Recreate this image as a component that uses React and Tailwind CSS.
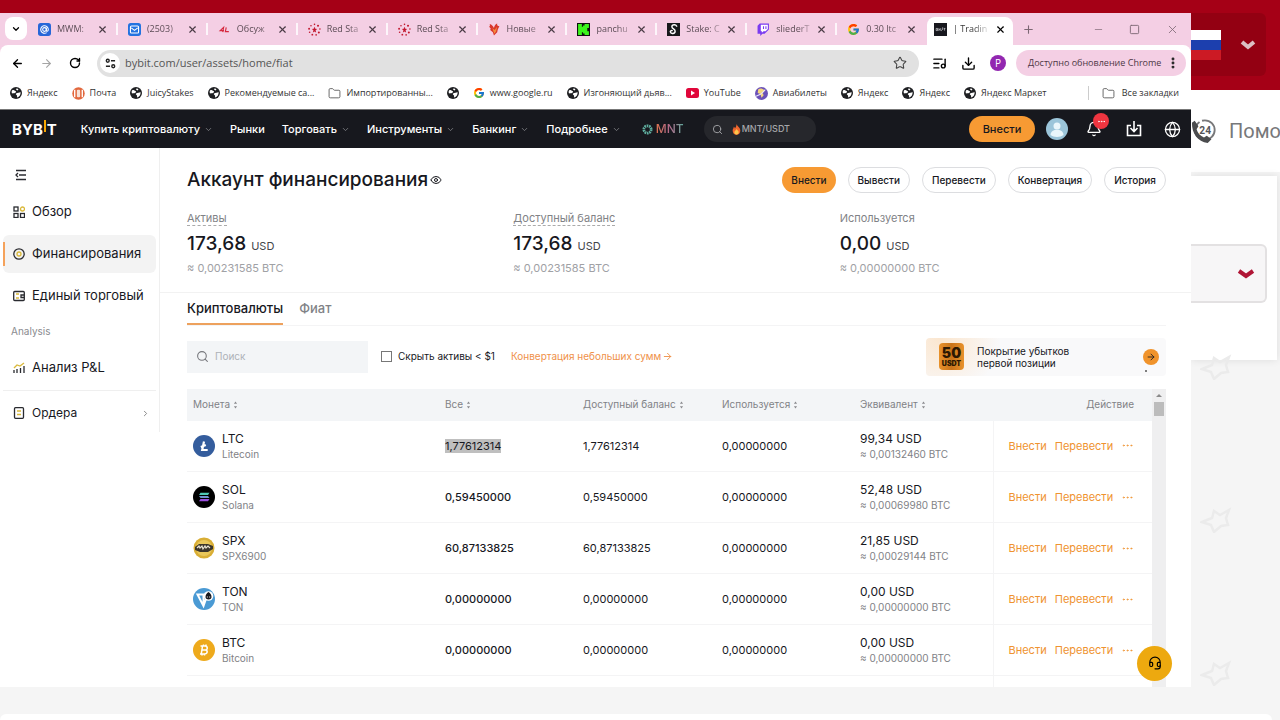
import React from "react";
import {
  ArrowLeft, ArrowRight, RotateCw, ChevronDown, ChevronRight, X, Plus, Minus, Square, Star,
  Download, EllipsisVertical, Ellipsis, Folder, Search, Bell, Globe, Eye, ListMusic, Headset,
} from "lucide-react";
import { FcGoogle } from "react-icons/fc";

function WorldIcon() {
  return (
    <svg viewBox="0 0 24 24" className="size-3 shrink-0">
      <circle cx="12" cy="12" r="12" fill="#1f2023" />
      <path d="M5 6c3 0 4 1 6 2 2 1 1 3-1 4s-4 0-6 1c-1-3-1-5 1-7Z" fill="#fff" />
      <path d="M12 13c3-2 7-1 9-3 1 5-2 10-7 11 0-3 1-4-1-5-1-1-2-2-1-3Z" fill="#fff" />
      <path d="M13 3c2 0 3 1 4 2l-2 2-3-2Z" fill="#fff" />
    </svg>
  );
}

function MailAt() {
  return (
    <svg viewBox="0 0 24 24" className="size-[13px] shrink-0">
      <rect width="24" height="24" rx="5" fill="#2767d8" />
      <g fill="none" stroke="#fff" strokeWidth="2">
        <circle cx="12" cy="12" r="3.4" />
        <path d="M15.4 8.8v4.4c0 3 3.600 2.600 3.600-1.200a7 7 0 1 0-3 5.700" />
      </g>
    </svg>
  );
}

function MailBox() {
  return (
    <svg viewBox="0 0 24 24" className="size-[13px] shrink-0">
      <rect width="24" height="24" rx="5" fill="#2373e0" />
      <rect x="4.500" y="5.500" width="15" height="13" rx="2" fill="none" stroke="#fff" strokeWidth="2" />
      <path d="m6 9 6 4.500L18 9" fill="none" stroke="#fff" strokeWidth="2" />
    </svg>
  );
}

function ForumIcon() {
  return (
    <svg viewBox="0 0 30 24" className="size-[13px] shrink-0">
      <path d="M11 18 13 7 5 14.500h9M19 7l-2 10h8" fill="none" stroke="#d6293e" strokeWidth="2.600" />
    </svg>
  );
}

function RedStar() {
  return (
    <svg viewBox="0 0 24 24" className="size-[13px] shrink-0">
      <path d="m12 7 1.500 3.500L17 11l-3 2.500 1 4-3-2-3 2 1-4L7 11l3.500-.5Z" fill="#c2182e" />
      <g fill="#c2182e">
        <circle cx="12" cy="2.500" r="1.500" /><circle cx="18.500" cy="5" r="1.900" /><circle cx="22" cy="11" r="1.500" />
        <circle cx="20" cy="17.500" r="1.900" /><circle cx="15" cy="22" r="1.500" /><circle cx="8" cy="21.500" r="1.700" />
        <circle cx="3" cy="17" r="1.500" /><circle cx="2" cy="10.500" r="1.800" /><circle cx="5.500" cy="5" r="1.500" />
      </g>
    </svg>
  );
}

function FoxIcon() {
  return (
    <svg viewBox="0 0 24 24" className="size-[13px] shrink-0">
      <path d="M3 2c4 1 6 4 8 7 1-4 3-7 6-8-1 3 1 5 4 5l-3 6-1 5-6 6-2-6-5-4 1-3-3-3c2-1 2-3 1-5Z" fill="#d9372b" />
      <path d="m8 9 4 4 5-6-2 8-3 5-2-5Z" fill="#f28a3c" />
    </svg>
  );
}

function KickIcon() {
  return (
    <svg viewBox="0 0 24 24" className="size-[13px] shrink-0">
      <rect width="24" height="24" fill="#111" />
      <path d="M2 2h7v5h2V4.500h3V2h8v7h-3v3h-2.500 2.500v3h3v7h-8v-2.500h-3V17H9v5H2Z" fill="#3df51d" />
    </svg>
  );
}

function StakeIcon() {
  return (
    <svg viewBox="0 0 24 24" className="size-[13px] shrink-0">
      <rect width="24" height="24" fill="#17181b" />
      <path d="M18 7c0-5-9-5-9 0 0 4 6 4 6 8 0 5-8 6-9 1 0-2 3-3 4-1" fill="none" stroke="#fff" strokeWidth="2.600" />
    </svg>
  );
}

function TwitchIcon() {
  return (
    <svg viewBox="0 0 24 24" className="size-[13px] shrink-0">
      <path d="M5 1 1 5v15h5v4l4-4h4l8-8V1Z" fill="#7a3bf0" />
      <path d="M7 3h13v8l-4 4h-4l-3 3v-3H7Z" fill="#fff" />
      <path d="M12 6v5M16.500 6v5" stroke="#7a3bf0" strokeWidth="2" />
    </svg>
  );
}

function BybitTabIcon() {
  return (
    <svg viewBox="0 0 24 24" className="size-[13px] shrink-0">
      <rect width="24" height="24" fill="#17181e" />
      <path d="M4 10h2.500v4H4ZM8 10l1 2v2l2-4M12.500 10v4h2M16 8v5M18 10h3M19.500 10v4" fill="none" stroke="#d5d6da" strokeWidth="1.300" />
    </svg>
  );
}

const tabs = [
  ["MWM:", <MailAt />],
  ["(2503)", <MailBox />],
  ["Обсуж", <ForumIcon />],
  ["Red Sta", <RedStar />],
  ["Red Sta", <RedStar />],
  ["Новые", <FoxIcon />],
  ["panchu", <KickIcon />],
  ["Stake: С", <StakeIcon />],
  ["sliederT", <TwitchIcon />],
  ["0.30 ltc", <FcGoogle className="size-[13px] shrink-0" />],
];

function TabStrip() {
  return (
    <div className="flex h-8 items-end bg-[#f4cfe4] pl-[5px]">
      <button aria-label="Поиск вкладок" className="mb-[5px] mr-px grid h-[23px] w-[22px] shrink-0 place-items-center rounded-lg bg-white">
        <ChevronDown size={10} strokeWidth={3} />
      </button>
      <div className="grid min-w-0 flex-1 grid-cols-11">
        {tabs.map(([name, icon], i) => (
          <div key={i} className="flex h-8 min-w-0 items-center pl-[10px]">
            {icon}
            <span className="ml-[6px] flex-1 whitespace-nowrap bg-linear-to-r from-[#55464f] from-60% to-[#55464f]/20 bg-clip-text text-[9px] text-transparent">{name}</span>
            <button aria-label="Закрыть вкладку" className="ml-1 text-[#4a3b45]"><X size={11} strokeWidth={2.500} /></button>
            <i className={i === 9 ? "ml-2 w-[2px]" : "ml-2 h-3 w-[2px] bg-white/80"} />
          </div>
        ))}
        <div className="flex h-8 min-w-0 items-end">
          <div className="mr-1 flex h-7 min-w-0 flex-1 items-center rounded-t-lg bg-white px-[7px] pb-1">
            <BybitTabIcon />
            <span className="ml-[6px] flex-1 whitespace-nowrap bg-linear-to-r from-[#333] from-60% to-[#333]/20 bg-clip-text text-[9px] text-transparent">| Tradin</span>
            <button aria-label="Закрыть вкладку" className="ml-2"><X size={11} strokeWidth={2.500} /></button>
          </div>
        </div>
      </div>
      <div className="flex h-8 w-[174px] shrink-0 items-center justify-between pr-3 pl-[5px] text-[#7d6874]">
        <button aria-label="Новая вкладка" className="mr-8"><Plus size={13} strokeWidth={2} /></button>
        <button aria-label="Свернуть"><Minus size={11} strokeWidth={1.500} /></button>
        <button aria-label="Развернуть"><Square size={11} strokeWidth={2} /></button>
        <button aria-label="Закрыть"><X size={13} strokeWidth={1.500} /></button>
      </div>
    </div>
  );
}

function AddressBar() {
  return (
    <div className="flex h-9 items-center rounded-t-lg bg-white pr-[5px] pl-[11px]">
      <div className="flex w-[86px] shrink-0 items-center gap-4">
        <button aria-label="Назад"><ArrowLeft size={13} strokeWidth={2.500} /></button>
        <button aria-label="Вперёд" className="text-[#a5a5a5]"><ArrowRight size={13} strokeWidth={2} /></button>
        <button aria-label="Обновить"><RotateCw size={12} strokeWidth={2.800} /></button>
      </div>
      <div className="flex h-[27px] flex-1 items-center rounded-full bg-[#e1e1e1] pr-3 pl-[3px]">
        <span className="grid size-5 shrink-0 place-items-center rounded-full bg-white">
          <svg viewBox="0 0 12 12" className="size-[11px]" fill="none" stroke="#222" strokeWidth="1.500">
            <circle cx="3" cy="3" r="1.600" /><path d="M6.500 3H11M1 9h4.500" /><circle cx="9" cy="9" r="1.600" />
          </svg>
        </span>
        <input aria-label="Адрес" defaultValue="bybit.com/user/assets/home/fiat" className="ml-[5px] min-w-0 flex-1 bg-transparent text-[11px] text-[#555] outline-none" />
        <button aria-label="Добавить в закладки"><Star size={14} strokeWidth={1.800} className="text-[#444]" /></button>
      </div>
      <div className="ml-[13px] flex items-center gap-[14px]">
        <button aria-label="Медиа"><ListMusic size={15} strokeWidth={2.200} /></button>
        <button aria-label="Загрузки"><Download size={15} strokeWidth={2.200} /></button>
        <button aria-label="Профиль" className="grid size-4 place-items-center rounded-full bg-[#9227b0] text-[10px] text-white">P</button>
      </div>
      <button className="ml-[10px] flex h-[26px] w-[170px] shrink-0 items-center justify-between rounded-full bg-[#f4cfe4] pr-[6px] pl-3 text-[9px] whitespace-nowrap text-[#4d3745]">
        Доступно обновление Chrome
        <EllipsisVertical size={14} strokeWidth={3} className="shrink-0 text-[#222]" />
      </button>
    </div>
  );
}

const world = <WorldIcon />;
const folder = <Folder size={13} strokeWidth={1.600} className="shrink-0 text-[#555]" />;

const bookmarks = [
  ["Яндекс", world],
  ["Почта", (
    <svg viewBox="0 0 24 24" className="size-[13px] shrink-0">
      <circle cx="12" cy="12" r="11.500" fill="#e2673c" />
      <path d="M5 5v14M19 5v14" stroke="#fff" strokeWidth="2.500" />
      <rect x="9" y="5" width="6" height="14" rx="2" fill="#f7e2d8" />
    </svg>
  )],
  ["JuicyStakes", world],
  ["Рекомендуемые са...", world],
  ["Импортированны...", folder],
  ["", world],
  ["www.google.ru", <FcGoogle className="size-3 shrink-0" />],
  ["Изгоняющий дьяв...", world],
  ["YouTube", (
    <svg viewBox="0 0 26 20" className="h-[10px] w-[13px] shrink-0">
      <rect width="26" height="20" rx="5" fill="#e0063a" /><path d="m10 5 8 5-8 5Z" fill="#fff" />
    </svg>
  )],
  ["Авиабилеты", (
    <svg viewBox="0 0 24 24" className="size-[13px] shrink-0">
      <circle cx="12" cy="12" r="12" fill="#6b51b8" />
      <path d="M6 4c5-3 10 0 12 3l-4 4 2 4-4 5-2-7-5-2Z" fill="#f4d67c" />
      <path d="m2 17 9-4 8-8" fill="none" stroke="#e9e3fb" strokeWidth="2" />
    </svg>
  )],
  ["Яндекс", world],
  ["Яндекс", world],
  ["Яндекс Маркет", world],
];

function Bookmarks() {
  return (
    <nav aria-label="Закладки" className="flex h-7 items-center justify-between bg-white pr-3 pb-1 pl-[10px] text-[9px] whitespace-nowrap text-[#333]">
      <div className="flex items-center gap-[14px]">
        {bookmarks.map(([name, icon], i) => (
          <a key={i} href="#" aria-label={name || "Закладка"} className="flex items-center gap-[5px]">{icon}{name}</a>
        ))}
      </div>
      <a href="#" className="flex items-center gap-[7px] border-l border-[#ccc] pl-[13px] leading-[14px]">{folder}Все закладки</a>
    </nav>
  );
}

const menu = [["Купить криптовалюту", true], ["Рынки", false], ["Торговать", true], ["Инструменты", true], ["Банкинг", true], ["Подробнее", true]];

function SiteHeader() {
  return (
    <header className="flex h-[39px] items-center border-t border-[#777] bg-[#17181e] pr-[10px] pl-3 font-[Inter,sans-serif] text-white">
      <a href="#" aria-label="BYBIT" className="mr-6 flex items-center text-[15px] leading-none font-bold">
        BYB<i className="mx-px mb-[6px] h-3 w-[2px] bg-[#f7a600]" />T
      </a>
      <nav className="flex items-center gap-[17px] text-[11px] font-medium whitespace-nowrap">
        {menu.map(([name, more]) => (
          <a key={name} href="#" className="flex items-center gap-1">
            {name}{more && <ChevronDown size={9} className="text-[#8b8c90]" />}
          </a>
        ))}
        <a href="#" className="ml-1 flex items-center gap-[3px] text-[12px]">
          <svg viewBox="0 0 24 24" className="size-[11px]">
            <circle cx="12" cy="12" r="8" fill="none" stroke="#5fae9f" strokeWidth="6" strokeDasharray="3.500 1.500" />
          </svg>
          <span className="bg-linear-to-r from-[#e0734c] via-[#b06a8d] to-[#4ea99b] bg-clip-text text-transparent">MNT</span>
        </a>
      </nav>
      <label className="ml-5 flex h-[26px] w-28 items-center rounded-full bg-[#26272c] pl-2">
        <Search size={11} className="shrink-0 text-[#a5a6aa]" />
        <svg viewBox="0 0 16 20" className="mr-px ml-[9px] h-[11px] w-[9px] shrink-0">
          <path d="M8 0c1 4 7 6 7 12 0 5-3 8-7 8s-7-3-7-8c0-3 2-4 2-7 2 1 2 2 2 3 2-2 3-4 3-8Z" fill="#f0662e" />
          <path d="M8 9c1 2 4 3 4 6 0 3-2 4-4 4s-4-1-4-4c0-2 3-3 4-6Z" fill="#fbc54a" />
        </svg>
        <input aria-label="Поиск пары" placeholder="MNT/USDT" className="w-16 bg-transparent text-[9px] font-medium outline-none placeholder:text-[#a5a6aa]" />
      </label>
      <div className="ml-auto flex items-center">
        <button className="h-[26px] w-[66px] rounded-full bg-[#f79a33] text-[11px] font-medium text-[#17181e]">Внести</button>
        <button aria-label="Аккаунт" className="ml-[11px]">
          <svg viewBox="0 0 22 22" className="size-[22px]">
            <circle cx="11" cy="11" r="11" fill="#9cc5da" />
            <circle cx="11" cy="8" r="3.500" fill="#eaf6fb" />
            <path d="M4.500 17c0-7 13-7 13 0-3 2.500-10 2.500-13 0Z" fill="#eaf6fb" />
          </svg>
        </button>
        <button aria-label="Уведомления" className="relative ml-[18px]">
          <Bell size={16} />
          <span className="absolute -top-[8px] left-[7px] grid size-4 place-items-center rounded-full bg-[#ee3540]"><Ellipsis size={9} /></span>
        </button>
        <button aria-label="Скачать" className="ml-6">
          <svg viewBox="0 0 16 16" className="size-4" fill="none" stroke="#fff" strokeWidth="1.600">
            <path d="M5 4.500H1.500v10h13v-10H11M8 0v10M4.500 7 8 10.500 11.500 7" />
          </svg>
        </button>
        <button aria-label="Язык" className="ml-[22px]"><Globe size={17} strokeWidth={1.800} /></button>
      </div>
    </header>
  );
}

const side = { fill: "none", stroke: "#2a2b30", strokeWidth: 1.3 };
const gold = "#d9b83a";

const sideItems = [
  ["Обзор", <g {...side}><rect x="1" y="1" width="4" height="4" /><rect x="1" y="7.500" width="4" height="4" /><rect x="7.500" y="7.500" width="4" height="4" /><circle cx="9.500" cy="3" r="2" stroke={gold} /></g>],
  ["Финансирования", <g {...side}><circle cx="6" cy="6" r="5.200" /><circle cx="6" cy="6" r="2" stroke={gold} /></g>],
  ["Единый торговый", <g {...side}><rect x=".7" y="1.500" width="10.600" height="9" rx="1" /><path d="M11.300 5H8v2.500h3.300" /><path d="M3 4h3M3 8h3" stroke={gold} /></g>],
];

function SideLink({ name, icon, active }) {
  return (
    <a href="#" className={active
      ? "flex h-[38px] items-center rounded-md bg-[#f3f3f3] pl-[10px]"
      : "flex h-[38px] items-center pl-[10px]"}>
      {active && <i className="-ml-[10px] mr-2 h-6 w-[2px] bg-[#f5a25b]" />}
      <svg viewBox="0 0 12 12" className="mr-[7px] size-3">{icon}</svg>
      {name}
    </a>
  );
}

function Sidebar() {
  return (
    <aside className="flex h-[284px] w-40 shrink-0 flex-col border-r border-[#efefef] px-[3px] text-[13px] whitespace-nowrap text-[#17181e]">
      <button aria-label="Свернуть меню" className="mt-[21px] ml-3 w-3">
        <svg viewBox="0 0 12 12" className="size-3" fill="none" stroke="#2a2b30" strokeWidth="1.300">
          <path d="M1 1.500h10M4 6h7M1 10.500h10M3 4 1 6l2 2" />
        </svg>
      </button>
      <div className="mt-3 flex flex-col gap-1">
        {sideItems.map(([name, icon], i) => <SideLink key={name} name={name} icon={icon} active={i === 1} />)}
      </div>
      <p className="mt-2 pl-2 text-[10px] leading-4 text-[#8a8b8f]">Analysis</p>
      <div className="mt-[10px] border-b border-[#efefef] pb-[3px]">
        <SideLink name="Анализ P&L" icon={<g {...side}><path d="M1 8v3M4 7v4M7.500 6v5M11 4v7" /><path d="m1 6 3-3 3 1 4-3" stroke={gold} /></g>} />
      </div>
      <a href="#" className="mt-[10px] flex items-center pl-[10px] text-[12px] leading-6">
        <svg viewBox="0 0 12 12" className="mr-[7px] size-3"><g {...side}><rect x="1.500" y=".7" width="9" height="10.600" rx="1" /><path d="M4 4h4M4 7.500h4" stroke={gold} /></g></svg>
        Ордера
        <ChevronRight size={9} className="mr-[6px] ml-auto text-[#666]" />
      </a>
    </aside>
  );
}

const stats = [["Активы", "173,68", "0,00231585", true], ["Доступный баланс", "173,68", "0,00231585", true], ["Используется", "0,00", "0,00000000", false]];

function Summary() {
  return (
    <section className="border-b border-[#f2f2f2] pt-[18px] pr-[25px] pb-4 pl-[27px]">
      <div className="flex items-center justify-between">
        <h1 className="flex items-center gap-[2px] text-[19px] font-medium">Аккаунт финансирования <Eye size={12} /></h1>
        <div className="flex gap-3 text-[10px] font-medium">
          <button className="h-[26px] rounded-full bg-[#f79a33] px-[9px]">Внести</button>
          {["Вывести", "Перевести", "Конвертация", "История"].map((b) => (
            <button key={b} className="h-[26px] rounded-full border border-[#dcdde0] px-[9px]">{b}</button>
          ))}
        </div>
      </div>
      <dl className="mt-[15px] grid grid-cols-3">
        {stats.map(([name, usd, btc, dashed]) => (
          <div key={name}>
            <dt className="text-[11px] leading-4 text-[#818286]">
              <span className={dashed ? "border-b border-dashed border-[#aaa]" : ""}>{name}</span>
            </dt>
            <dd className="mt-1 text-[19px] leading-7 font-medium">{usd} <span className="text-[11px] font-normal text-[#44454a]">USD</span></dd>
            <dd className="text-[11px] leading-4 text-[#a0a1a5]">≈ {btc} BTC</dd>
          </div>
        ))}
      </dl>
    </section>
  );
}

function Filters() {
  return (
    <div className="mt-3 flex items-center text-[10px]">
      <label className="flex h-8 w-[181px] items-center gap-[6px] bg-[#f3f5f7] pl-[9px]">
        <Search size={13} className="text-[#77787d]" />
        <input aria-label="Поиск" placeholder="Поиск" className="w-32 bg-transparent outline-none placeholder:text-[#adb1b8]" />
      </label>
      <label className="ml-[13px] flex items-center gap-[6px] whitespace-nowrap">
        <input type="checkbox" className="size-[11px] appearance-none border border-[#777]" />
        Скрыть активы &lt; $1
      </label>
      <a href="#" className="ml-4 flex items-center gap-px whitespace-nowrap text-[#ef9149]">
        Конвертация небольших сумм <ArrowRight size={11} />
      </a>
      <a href="#" className="relative ml-auto flex h-[38px] w-60 items-center rounded-sm bg-[#f9f9fa] bg-[radial-gradient(circle_at_6%_0%,#fbe6cf_0%,#f9f9fa_26%)] pr-[7px] pl-[13px]">
        <span className="flex h-[27px] w-[25px] flex-col items-center justify-center rounded-sm bg-linear-to-r from-[#e8922c] via-[#c9741a] to-[#e8922c] font-bold text-[#2b1802]">
          <b className="text-[14px] leading-[14px]">50</b>
          <b className="text-[7px] leading-[8px]">USDT</b>
        </span>
        <span className="ml-[13px] leading-3">Покрытие убытков<br />первой позиции</span>
        <span className="ml-auto grid size-4 place-items-center rounded-full bg-[#f0932b]"><ArrowRight size={10} /></span>
        <i className="absolute right-[19px] bottom-1 size-[2px] rounded-full bg-[#555]" />
      </a>
    </div>
  );
}

const icons = {
  LTC: <><circle cx="11" cy="11" r="11" fill="#345d9d" /><path d="M11 6.500 9.200 15h5.500M7.800 12l5-2" fill="none" stroke="#fff" strokeWidth="2.200" /></>,
  SOL: <><circle cx="11" cy="11" r="11" fill="#000" /><path d="M7.500 6.800h9L15 9H6Z" fill="#4fc9b5" /><path d="M6 9.900h9l1.500 2.200h-9Z" fill="#6f93cf" /><path d="M7.500 13h9L15 15.200H6Z" fill="#9b4fe0" /></>,
  SPX: <><circle cx="11" cy="11" r="10.500" fill="#d9ae35" /><circle cx="11" cy="11" r="8" fill="#e9c75a" /><path d="m2 10 4-3h9l5 2v3l-5 3H7l-5-2Z" fill="#3b352b" /><path d="m4 11 2-2 1 2 2-2 1 3 2-3 1 2 2-2 2 2" fill="none" stroke="#e8e3d3" strokeWidth="1.200" /></>,
  TON: <><circle cx="11" cy="11" r="11" fill="#4a9ad4" /><path d="M4.500 6.500h10l-4 11.500Z M10.500 7v10" fill="none" stroke="#fff" strokeWidth="2" /><circle cx="15.500" cy="8" r="4.800" fill="#fff" /><path d="M15.500 4c2 1 3 3 3 5 0 1.500-1 2.500-3 2.500s-3-1-3-2.500c0-2 1-4 3-5Z" fill="#17181e" /><path d="M14.300 8.500v1M16.700 8.500v1" stroke="#fff" /></>,
  BTC: <><circle cx="11" cy="11" r="11" fill="#eeaa1c" /><path d="M9.500 7 8.300 15h3c3.500 0 3.700-3.500 1.200-4 2.500-.5 2.300-4-.5-4Zm-.5 4h3.500M10.500 5.500V7M13 5.500V7M9 15v1.500M11.500 15v1.500M7.500 7H10M7 15h2" fill="none" stroke="#fff" strokeWidth="1.500" /></>,
};

const coins = [
  ["LTC", "Litecoin", "1,77612314", "99,34", "0,00132460"],
  ["SOL", "Solana", "0,59450000", "52,48", "0,00069980"],
  ["SPX", "SPX6900", "60,87133825", "21,85", "0,00029144"],
  ["TON", "TON", "0,00000000", "0,00", "0,00000000"],
  ["BTC", "Bitcoin", "0,00000000", "0,00", "0,00000000"],
];

function Sort() {
  return (
    <svg viewBox="0 0 6 10" className="ml-[3px] inline-block h-2 w-[5px] align-[-1px]" fill="#8a8b8f">
      <path d="m3 .500 2 3H1ZM3 9.500 1 6.500h4Z" />
    </svg>
  );
}

function Coins() {
  return (
    <div className="mt-[13px] flex">
      <table className="w-full table-fixed border-collapse text-left">
        <colgroup>
          <col className="w-[252px]" /><col className="w-[138px]" /><col className="w-[139px]" />
          <col className="w-[138px]" /><col className="w-[139px]" /><col className="w-[159px]" />
        </colgroup>
        <thead>
          <tr className="h-8 bg-[#f3f5f7] text-[10px] text-[#818286]">
            {["Монета", "Все", "Доступный баланс", "Используется", "Эквивалент"].map((h) => (
              <th key={h} className="px-[6px] font-normal whitespace-nowrap">{h}<Sort /></th>
            ))}
            <th className="pr-[18px] text-right font-normal">Действие</th>
          </tr>
        </thead>
        <tbody className="text-[11px] text-[#17181e]">
          {coins.map(([sym, name, amount, usd, btc], i) => (
            <tr key={sym} className="h-[51px] border-b border-[#f4f4f5]">
              <td className="px-[6px]">
                <div className="flex items-center gap-[7px]">
                  <svg viewBox="0 0 22 22" className="size-[22px]">{icons[sym]}</svg>
                  <div className="text-[12px] leading-4">{sym}<div className="text-[10px] leading-[14px] text-[#818286]">{name}</div></div>
                </div>
              </td>
              <td className={i === 0 ? "px-[6px]" : "px-[6px] font-medium"}>
                <span className={i === 0 ? "bg-[#bfbfbf] leading-[14px]" : ""}>{amount}</span>
              </td>
              <td className="px-[6px]">{amount}</td>
              <td className="px-[6px]">0,00000000</td>
              <td className="px-[6px] text-[12px] leading-4">{usd} USD<div className="text-[10px] leading-[14px] text-[#818286]">≈ {btc} BTC</div></td>
              <td className="border-l border-[#f4f4f5] pl-[15px]">
                <div className="flex items-center gap-2 text-[#ef9330]">
                  <button>Внести</button><button>Перевести</button>
                  <button aria-label="Ещё"><Ellipsis size={13} strokeWidth={1.500} /></button>
                </div>
              </td>
            </tr>
          ))}
          <tr className="h-[11px]"><td colSpan={5} /><td className="border-l border-[#f4f4f5]" /></tr>
        </tbody>
      </table>
      <div className="flex w-[14px] shrink-0 flex-col items-center bg-[#efeff0] pt-[5px]">
        <i className="size-0 border-x-[3px] border-b-[3px] border-x-transparent border-b-[#8a8a8a]" />
        <i className="mt-[5px] h-[14px] w-[10px] bg-[#bcbcbc]" />
      </div>
    </div>
  );
}

function Browser() {
  return (
    <main className="relative min-w-0 flex-1 overflow-hidden bg-[#f4cfe4] font-['Open_Sans',sans-serif]">
      <TabStrip />
      <AddressBar />
      <Bookmarks />
      <SiteHeader />
      <div className="flex bg-white font-[Inter,sans-serif] text-[#17181e]">
        <Sidebar />
        <div className="min-w-0 flex-1">
          <Summary />
          <section className="pr-[25px] pl-[27px]">
            <div className="flex gap-4 border-b border-[#f4f4f5] text-[13px] font-medium">
              <button className="h-8 border-b-2 border-[#eda15d] pt-[3px]">Криптовалюты</button>
              <button className="h-8 pt-px text-[#818286]">Фиат</button>
            </div>
            <Filters />
            <Coins />
          </section>
        </div>
      </div>
      <button aria-label="Поддержка" className="absolute right-[19px] bottom-[6px] grid size-[35px] place-items-center rounded-full bg-[#eda90f]">
        <Headset size={14} />
      </button>
    </main>
  );
}

function FaintStar() {
  return (
    <svg viewBox="0 0 32 26" className="ml-[9px] h-[26px] w-8" fill="none" stroke="#ebebeb" strokeWidth="2.500">
      <path d="m2 15 10-4 2-7 6 4 9-5-3 8 2 7-7 1-7 6-3-7Z" />
    </svg>
  );
}

function PageBehind() {
  return (
    <aside className="flex w-[89px] shrink-0 flex-col overflow-hidden font-[Roboto,sans-serif]">
      <div className="h-[77px] bg-[#a50016] pr-[14px]">
        <button aria-label="Язык" className="flex h-[63px] w-full items-center justify-between rounded-r-md bg-[#930012] pr-[10px] text-[#dcc0c4]">
          <svg viewBox="0 0 30 30" className="h-[30px] w-[30px]">
            <rect width="30" height="10" fill="#fff" /><rect y="10" width="30" height="10" fill="#1c3fae" /><rect y="20" width="30" height="10" fill="#cc1a24" />
          </svg>
          <svg viewBox="0 0 16 10" className="h-[10px] w-4" fill="none" stroke="currentColor" strokeWidth="4"><path d="m2 2 6 5 6-5" /></svg>
        </button>
      </div>
      <a href="#" className="flex h-[82px] items-center gap-3 bg-white text-[20px] whitespace-nowrap text-[#77787a]">
        <svg viewBox="0 0 26 28" className="size-[26px] shrink-0">
          <circle cx="14" cy="13" r="10.500" fill="none" stroke="#77787a" strokeWidth="2" strokeDasharray="20 3" />
          <path d="M0 5c0 12 6 20 17 22l4-4-5-4-3 2c-4-2-7-5-8-9l2-3-4-6Z" fill="#4b4c4e" />
          <text x="8" y="17" fontSize="11" fontWeight="700" fill="#55565a">24</text>
        </svg>
        Помощь
      </a>
      <div className="mt-1 mr-[3px] h-[184px] bg-white pt-[68px] pr-[10px] shadow-[0_0_8px_#0000001a]">
        <button aria-label="Выбрать" className="flex h-[59px] w-full items-center justify-end rounded-r-md border-2 border-l-0 border-[#e3e1e2] bg-[#f7f6f7] pr-[10px] text-[#b01535]">
          <svg viewBox="0 0 18 10" className="h-[10px] w-[18px]" fill="none" stroke="currentColor" strokeWidth="4"><path d="m2 2 7 5 7-5" /></svg>
        </button>
      </div>
      <div className="-mt-[6px] flex flex-1 flex-col justify-between pb-px"><FaintStar /><FaintStar /><FaintStar /></div>
    </aside>
  );
}

export default function App() {
  return (
    <div className="flex min-h-screen flex-col overflow-hidden bg-[#f5f5f5]">
      <div className="h-[13px] bg-[#a50016]" />
      <div className="flex">
        <Browser />
        <PageBehind />
      </div>
      <div className="mt-[27px] mr-2 min-h-[6px] flex-1 rounded-t-xl bg-white" />
    </div>
  );
}
